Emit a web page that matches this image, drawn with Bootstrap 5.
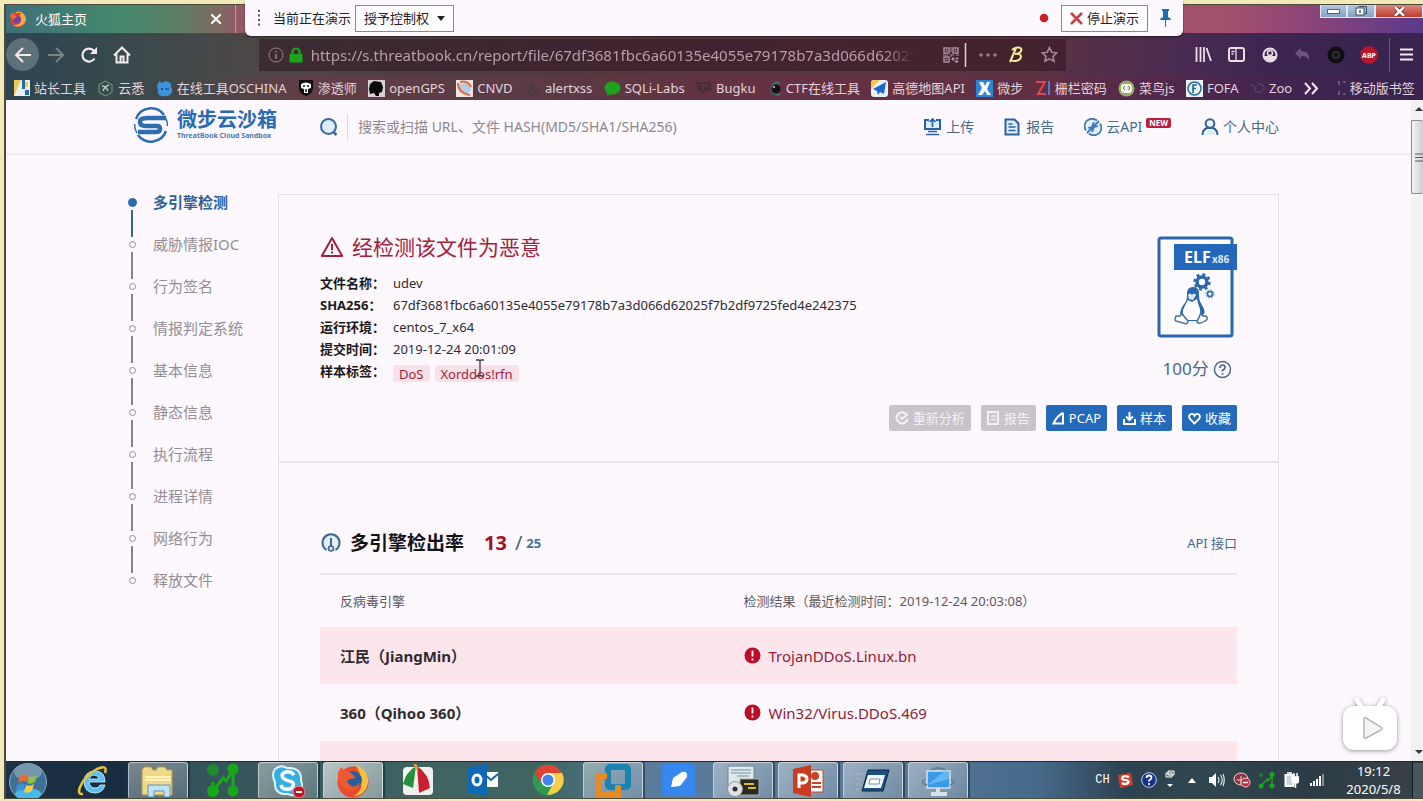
<!DOCTYPE html>
<html lang="zh-CN">
<head>
<meta charset="utf-8">
<meta name="viewport" content="width=device-width, initial-scale=1">
<title>微步云沙箱</title>
<link href="https://cdn.jsdelivr.net/npm/bootstrap@5.3.0/dist/css/bootstrap.min.css" rel="stylesheet">
<style>
:root { --ink:#2f2b31; --blue:#2a69b3; --steel:#49698a; --red:#a3213a; --page:#fcf8fd; --rule:#e9e4ea; }
body { font-family:"Noto Sans","Noto Sans CJK SC",sans-serif; font-size:13px; line-height:22px; color:var(--ink); background:#f1e9b8; }
a { text-decoration:none; color:inherit; }
svg { display:block; flex:none; }
.desk { height:100vh; padding:4px 0 2px 4px; overflow:hidden; }
.desk-inner { border-left:2px solid #4b4a3c; border-top:1px solid #4b4a3c; border-bottom:1px solid #4b4a3c; min-height:0; }
/* browser chrome */
.tabstrip { height:28px; background:linear-gradient(90deg,#3f6f7c 0,#45886c 8%,#5c7f66 12%,#7d6a60 15%,#9b5468 17%,#a3506b 86%,#8c4478 92%,#5a3a8c 100%); color:#fff; }
.tab-item { width:230px; padding:0 14px 0 3px; border-right:1px solid #c09aa0; }
.btn-bare { background:none; border:0; padding:0; color:inherit; display:flex; align-items:center; justify-content:center; }
.wbtns button { height:13px; border:1px solid #dfe8f2; border-top:0; background:linear-gradient(#b4c8de,#84a2c4); display:flex; align-items:center; justify-content:center; padding:0; }
.wbtns .w-close { background:linear-gradient(#d88a80,#c03a2c); }
.chrome-bg { background:linear-gradient(90deg,#2d4452 0,#36494c 7%,#4c4747 17%,#503d43 30%,#55383f 45%,#5a3742 58%,#5b3443 73%,#4b2b50 82%,#3c2551 90%,#38244f 100%); color:#e3d3dc; }
.navbar-row { height:43px; }
.nav-cell { width:33px; height:33px; }
.back-cell { background:#5e7078; border-radius:50%; }
.url-box { flex:0 0 57%; height:32px; background:rgba(40,14,26,.45); }
.url-box input { background:none; border:0; outline:0; color:#b99dab; font-size:15px; line-height:22px; padding:0; min-width:0; -webkit-mask-image:linear-gradient(90deg,#000 95%,transparent); mask-image:linear-gradient(90deg,#000 95%,transparent); }
.bm-row { height:24px; background:linear-gradient(90deg,transparent 0,transparent 14%,rgba(130,50,75,.35) 21%,rgba(120,60,80,.2) 36%,rgba(120,40,70,.4) 55%,rgba(90,35,70,.3) 85%,transparent 100%); white-space:nowrap; overflow:hidden; }
/* sharing toolbar */
.share-bar { position:absolute; top:0; left:245px; right:240px; height:36px; padding:0 8px 0 12px; background:var(--page); border-radius:0 0 6px 6px; box-shadow:0 1px 2px rgba(0,0,0,.5); color:#222; }
.share-btn { height:27px; border:1px solid #8c898e; background:#fffcff; border-radius:0; padding:0 8px; font-size:13px; line-height:20px; color:#222; }
/* site */
.site { background:var(--page); min-height:0; overflow:hidden; }
.site-wrap { width:82%; margin-left:121px; }
.site-head { height:55px; border-bottom:2px solid #efebf0; font-size:14px; color:var(--steel); }
.brand { padding:0 0 3px 6px; }
.brand-text { font-size:20px; line-height:22px; font-weight:700; color:var(--blue); }
.brand-sub { font-size:7px; line-height:10px; font-weight:700; color:#5278a2; white-space:nowrap; }
.search-ico { margin-left:42px; }
.search-in { border:0; border-left:1px solid #ddd7de; background:none; outline:0; font-size:14px; padding:0 0 0 10px; line-height:26px; height:26px; }
.search-in::placeholder { color:#8d8890; opacity:1; }
.site-nav { gap:30px; }
.new-tag { background:#b8213d; color:#fff; font-size:8px; line-height:10px; font-weight:700; padding:0 3px; border-radius:2px; }
.side { width:151px; flex:none; padding-top:40px; font-size:15px; line-height:15px; color:#938e95; }
.side a { display:flex; height:42px; }
.marker { width:10px; margin-right:16px; display:flex; flex-direction:column; align-items:center; }
.marker i { width:7px; height:7px; border:1px solid #938e95; border-radius:50%; margin:4px 0; flex:none; }
.marker b { width:2px; height:27px; background:#868288; }
.side .on { color:#2f6098; font-weight:700; }
.on .marker i { width:9px; height:9px; margin:3px 0; background:#2a69b3; border-color:#2a69b3; }
.on .marker b { background:#3a6488; }
.side a:last-child b { display:none; }
.panel { margin-top:39px; border:1px solid #e4dfe5; border-bottom:0; }
.summary { padding:36px 41px 30px; border-bottom:2px solid var(--rule); }
.verdict { font-size:21px; line-height:32px; color:var(--red); margin:0 0 9px; font-weight:400; }
.facts { display:grid; grid-template-columns:73px 1fr; grid-auto-rows:22px; margin:0; }
.facts dt { font-weight:700; color:#1a181b; }
.facts dt, .eng-table thead th { font-family:"Noto Sans","Noto Sans CJK TC",sans-serif; }
.facts dd { margin:0; }
.label-tag { background:#f8e2e9; color:var(--red); border-radius:3px; padding:0 6px; line-height:18px; }
.tags { padding-top:5px; gap:5px; }
.score { font-size:17px; line-height:28px; color:var(--steel); }
.actions { margin-top:22px; gap:10px; }
.act { border:0; border-radius:2px; height:26px; line-height:26px; font-size:13px; color:#fff; background:#2469ba; padding:0 6px; display:flex; align-items:center; gap:4px; white-space:nowrap; }
.act:disabled { background:#c8c4c9; color:#f4f0f5; }
.engines { padding:65px 41px 0; }
.eng-head { padding-bottom:15px; border-bottom:2px solid var(--rule); line-height:30px; }
.eng-head h2 { font-size:19px; line-height:30px; font-weight:700; margin:0; color:#151316; }
.eng-table { width:100%; table-layout:fixed; }
.eng-table th, .eng-table td { padding:0 0 0 20px; height:57px; font-size:15px; }
.eng-table thead th { height:52px; font-size:13px; font-weight:400; color:#5d585f; }
.eng-table tbody tr:nth-child(odd) { background:#fde6eb; }
.eng-table td { color:#90203a; }
.eng-table .c1 { width:44%; }
.page-bar { width:12px; background:#f4f1f5; flex:none; }
.page-bar .thumb { height:74px; border:1px solid #8f8b91; border-right:0; border-radius:2px; background:linear-gradient(90deg,#f6f4f7,#cfccd1); }
.tv { position:absolute; right:23px; bottom:45px; filter:drop-shadow(0 1px 2px rgba(0,0,0,.4)); }
.cursor { position:absolute; left:474px; top:359px; }
/* taskbar */
.taskbar { height:37px; border-top:1px solid #1f2b30; overflow:hidden; background:linear-gradient(90deg,#1c3247 0,#172c3e 8%,#34525a 13%,#3f6462 30%,#3f6462 38%,#5a7c9c 45%,#557593 65%,#46698a 73%,#2d4250 79%,#30474f 85%,#2c3c46 92%,#3a4148 100%); color:#fff; }
.start { margin:0 14px 0 3px; }
.slot { width:65px; height:37px; padding:0 5px 0 0; flex:0 0 auto; }
.slot button { width:60px; height:100%; }
.slot .open { border:1px solid rgba(230,240,245,.65); border-bottom:0; border-radius:3px; background:linear-gradient(135deg,rgba(255,255,255,.42),rgba(190,205,215,.25)); box-shadow:1px 0 0 1px rgba(15,30,40,.5); }
.slot .front { background:linear-gradient(135deg,rgba(255,255,255,.65),rgba(220,220,225,.45)); }
.tray-cell { width:25px; display:flex; justify-content:center; }
.lang-bar .tray-cell { width:23px; }
.lang-bar .tray-cell:last-child { width:19px; }
.clock { width:83px; padding-left:6px; text-align:center; line-height:18px; }
</style>
</head>
<body>
<div class="desk d-flex flex-column position-relative">
<div class="desk-inner d-flex flex-column flex-grow-1">

<header class="flex-shrink-0">
  <div class="tabstrip d-flex justify-content-between">
    <div class="tab-item d-flex align-items-center">
      <svg width="18" height="18" viewBox="0 0 18 18"><circle cx="9" cy="9.500" r="7.500" fill="#e2452f"/><path d="M6 3C9-1 17 3 17 9c0 6-8 10-13 6 7 1 10-5 6-8L12 3z" fill="#f7a63a"/><circle cx="8" cy="9.500" r="4" fill="#7a3fa0"/><path d="M1 6l3-4 1 3 3 1-4 4z" fill="#ee6a38"/></svg>
      <span class="ms-2">火狐主页</span>
      <button class="btn-bare ms-auto" aria-label="关闭标签页"><svg width="10" height="10" viewBox="0 0 10 10"><path d="M0 0l10 10M10 0L0 10" stroke="#fff" stroke-width="2"/></svg></button>
    </div>
    <div class="wbtns d-flex">
      <button style="width:27px" aria-label="最小化"><svg width="13" height="5" viewBox="0 0 13 5"><rect x=".5" y=".5" width="12" height="4" fill="#fff" stroke="#51617a"/></svg></button>
      <button style="width:28px" aria-label="还原"><svg width="12" height="10" viewBox="0 0 12 10"><path d="M3.500.5h8v7h-2" fill="none" stroke="#3d4c62"/><rect x="1" y="2" width="8" height="7" fill="#fff" stroke="#3d4c62"/><rect x="4" y="4" width="2" height="3" fill="#6784a8"/></svg></button>
      <button class="w-close" style="width:48px" aria-label="关闭"><svg width="11" height="9" viewBox="0 0 11 9"><path d="M1 0l9 9M10 0L1 9" stroke="#5c2320" stroke-width="4"/><path d="M1 0l9 9M10 0L1 9" stroke="#fff" stroke-width="2.500"/></svg></button>
    </div>
  </div>

  <div class="chrome-bg">
    <nav class="navbar-row d-flex align-items-center">
      <button class="btn-bare nav-cell back-cell" aria-label="后退"><svg width="18" height="16" viewBox="0 0 18 16"><path d="M17 8H2M9 1L2 8l7 7" fill="none" stroke="#f2e8ee" stroke-width="2"/></svg></button>
      <button class="btn-bare nav-cell" aria-label="前进"><svg width="18" height="16" viewBox="0 0 18 16"><path d="M1 8h15M9 1l7 7-7 7" fill="none" stroke="#7d8387" stroke-width="2"/></svg></button>
      <button class="btn-bare nav-cell" aria-label="刷新"><svg width="18" height="18" viewBox="0 0 18 18"><path d="M14.500 12.500A6.500 6.500 0 1 1 14 5" fill="none" stroke="#f2e8ee" stroke-width="2.200"/><path d="M17 1v7h-7z" fill="#f2e8ee"/></svg></button>
      <button class="btn-bare nav-cell" aria-label="主页"><svg width="18" height="18" viewBox="0 0 18 18"><path d="M1 9.500L9 1.500l8 8M3.500 8v8.500h11V8M7.500 16v-5.500h3V16" fill="none" stroke="#f2e8ee" stroke-width="2"/></svg></button>
      <div class="flex-grow-1"></div>
      <div class="url-box d-flex align-items-center ps-2 pe-2">
        <svg width="18" height="18" viewBox="0 0 18 18"><circle cx="9" cy="9" r="7" fill="none" stroke="#9c7f8c"/><path d="M9 8v5M9 5v1.500" stroke="#9c7f8c" stroke-width="1.500"/></svg>
        <svg class="ms-1" width="14" height="16" viewBox="0 0 14 16"><path d="M3.500 8V5a3.500 3.500 0 0 1 7 0v3" fill="none" stroke="#1ba31b" stroke-width="2.200"/><rect x=".5" y="7" width="13" height="8.500" rx="1" fill="#1ba31b"/></svg>
        <input class="flex-grow-1 ms-2" type="text" aria-label="地址" value="https://s.threatbook.cn/report/file/67df3681fbc6a60135e4055e79178b7a3d066d620251">
        <svg class="ms-4 ps-1" width="22" height="16" viewBox="0 0 16 16"><path d="M1 1h5v5H1zM10 1h5v5h-5zM1 10h5v5H1z" fill="none" stroke="#a88d9a" stroke-width="1.500"/><path d="M3 3h1v1H3zM12 3h1v1h-1zM3 12h1v1H3zM8 0v5M8 7v3M0 8h5M8 8h3M13 8h3M9 11h2v2H9zM13 11h2v1h-2zM12 14h3v1h-3z" fill="#a88d9a" stroke="#a88d9a"/></svg>
        <svg class="ms-1" width="3" height="24" viewBox="0 0 3 24"><path d="M1.500 0v24" stroke="#e2d8b8" stroke-width="1.500"/></svg>
        <svg class="ms-2 me-2 ps-1" width="22" height="6" viewBox="0 0 18 6"><g fill="#9a7f8c"><circle cx="2" cy="3" r="1.800"/><circle cx="9" cy="3" r="1.800"/><circle cx="16" cy="3" r="1.800"/></g></svg>
        <svg class="ms-1" width="16" height="18" viewBox="0 0 16 18"><path d="M1 16L7 2M3 4c4-4 11-3 9 1-1 2-4 3-6 3 6-1 7 2 5 5-2 2-6 3-9 1" fill="none" stroke="#f3ee95" stroke-width="2"/></svg>
        <svg class="ms-3" width="17" height="17" viewBox="0 0 17 17"><path d="M8.500 1.500l2.200 4.700 5 .6-3.700 3.500 1 5-4.500-2.500L4 15.300l1-5L1.300 6.800l5-.6z" fill="none" stroke="#a88796" stroke-width="1.600"/></svg>
      </div>
      <div class="flex-grow-1"></div>
      <button class="btn-bare nav-cell" aria-label="书库"><svg width="17" height="15" viewBox="0 0 17 15"><path d="M1.500 0v15M5.500 0v15M9 0v15M11.500 1l4.500 13" stroke="#eadfe8" stroke-width="1.800"/></svg></button>
      <button class="btn-bare nav-cell" aria-label="侧栏"><svg width="17" height="15" viewBox="0 0 17 15"><rect x="1" y="1" width="15" height="13" rx="2" fill="none" stroke="#eadfe8" stroke-width="2"/><path d="M8 1v13M3.500 4.500h3M3.500 7h2" stroke="#eadfe8" stroke-width="1.300"/></svg></button>
      <button class="btn-bare nav-cell" aria-label="账户"><svg width="16" height="16" viewBox="0 0 16 16"><circle cx="8" cy="8" r="6.500" fill="none" stroke="#eadfe8" stroke-width="2"/><circle cx="8" cy="6" r="2.500" fill="none" stroke="#eadfe8" stroke-width="1.500"/><path d="M2 9h12q-2 5-6 5t-6-5z" fill="#eadfe8"/></svg></button>
      <button class="btn-bare nav-cell" aria-label="撤销"><svg width="15" height="13" viewBox="0 0 15 13"><path d="M0 5l6-5v3c6 0 9 4 8 10-1-4-4-5-8-5v3z" fill="#6c5680"/></svg></button>
      <button class="btn-bare nav-cell" aria-label="扩展"><svg width="18" height="18" viewBox="0 0 18 18"><circle cx="9" cy="9" r="8.500" fill="#101012"/><circle cx="9" cy="9" r="3" fill="none" stroke="#3b3340" stroke-width="1.500"/></svg></button>
      <button class="btn-bare nav-cell" aria-label="Adblock Plus"><svg width="18" height="18" viewBox="0 0 18 18"><path d="M5.500.5h7l5 5v7l-5 5h-7l-5-5v-7z" fill="#b9152b"/><text x="9" y="12" font-size="7" font-weight="700" fill="#fff" text-anchor="middle">ABP</text></svg></button>
      <svg width="5" height="34" viewBox="0 0 5 34"><path d="M4.500 0v34" stroke="#6b5878"/></svg>
      <button class="btn-bare nav-cell" aria-label="菜单"><svg width="13" height="13" viewBox="0 0 13 13"><path d="M0 1.500h13M0 6.500h13M0 11.500h13" stroke="#f2e8f0" stroke-width="2"/></svg></button>
    </nav>

    <div class="bm-row d-flex align-items-center justify-content-between ps-2 pe-2">
      <a href="#" class="d-flex align-items-center gap-1"><svg width="16" height="16" viewBox="0 0 16 16"><rect width="16" height="16" fill="#e8f0f4"/><path d="M0 16L7 0H0zM11 2h3v5h-3z" fill="#eacb55"/><path d="M8 0h3v9H8zM11 10h4v5h-4z" fill="#236ab0"/></svg>站长工具</a>
      <a href="#" class="d-flex align-items-center gap-1"><svg width="17" height="17" viewBox="0 0 17 17"><path d="M8.500 1l6.500 3.700v7.600L8.500 16 2 12.300V4.700z" fill="none" stroke="#7f9a8c"/><path d="M5 6q4 0 6 5M12 5q-4 1-6 6" fill="none" stroke="#9fd0b4" stroke-width="1.500"/></svg>云悉</a>
      <a href="#" class="d-flex align-items-center gap-1"><svg width="17" height="17" viewBox="0 0 17 17"><path d="M1 6L3 1l3 2c5-4 10 0 9 4 3 4 0 9-5 9-6 1-9-2-8-6z" fill="#3f92dc"/><circle cx="6" cy="9" r="1" fill="#143a60"/><path d="M9 9h4" stroke="#143a60"/></svg>在线工具OSCHINA</a>
      <a href="#" class="d-flex align-items-center gap-1"><svg width="16" height="16" viewBox="0 0 16 16"><path d="M1 0h14v9q-2 6-7 7-5-1-7-7z" fill="#0f0c10"/><path d="M3 4q5-3 10 0v4l-3 1v4H6V9L3 8z" fill="#fff"/><path d="M5 6h2M9 6h2M8 9v3" stroke="#111" stroke-width="1.500"/></svg>渗透师</a>
      <a href="#" class="d-flex align-items-center gap-1"><svg width="17" height="17" viewBox="0 0 17 17"><rect width="17" height="17" fill="#d8d2d6"/><path d="M2 4l4-3 7 1 2 5-1 5-3 1v3H8l-2-3-4 1-1-5z" fill="#0b0a0b"/></svg>openGPS</a>
      <a href="#" class="d-flex align-items-center gap-1"><svg width="17" height="17" viewBox="0 0 17 17"><rect width="17" height="17" fill="#efe6e2"/><circle cx="9" cy="8" r="6" fill="#b7cde0"/><path d="M2 3q0 10 12 12M4 2q8-2 11 5" fill="none" stroke="#de6a4c" stroke-width="2"/></svg>CNVD</a>
      <a href="#" class="d-flex align-items-center gap-1"><svg width="17" height="15" viewBox="0 0 17 15"><path d="M8 2l3 5-3 2-3-2zM2 14l3-5 3 3zM9 13l3-5 3 5z" fill="#463d3f"/></svg>alertxss</a>
      <a href="#" class="d-flex align-items-center gap-1"><svg width="17" height="15" viewBox="0 0 17 15"><ellipse cx="8.500" cy="7" rx="8" ry="6.500" fill="#1da41f"/><path d="M3 12v3l4-2z" fill="#1da41f"/></svg>SQLi-Labs</a>
      <a href="#" class="d-flex align-items-center gap-1"><svg width="16" height="14" viewBox="0 0 16 14"><path d="M0 1h15v9H9l-4 4v-4H2z" fill="#4c2c36"/><path d="M5 4h6M5 7h3" stroke="#6b4650"/></svg>Bugku</a>
      <a href="#" class="d-flex align-items-center gap-1"><svg width="15" height="16" viewBox="0 0 15 16"><path d="M13 3A6 6 0 1 0 13 14" fill="none" stroke="#327a7c" stroke-width="2"/><circle cx="9" cy="9" r="4.500" fill="#121014"/><circle cx="7" cy="7" r="1" fill="#ddd"/></svg>CTF在线工具</a>
      <a href="#" class="d-flex align-items-center gap-1"><svg width="17" height="17" viewBox="0 0 17 17"><rect width="17" height="17" rx="3" fill="#e9f0f2"/><path d="M0 3q0-3 4-3h5L0 9z" fill="#f4c84c"/><path d="M15 2L2 9l4 2 1 4 2-3 4 2z" fill="#1c66c5"/></svg>高德地图API</a>
      <a href="#" class="d-flex align-items-center gap-1"><svg width="17" height="17" viewBox="0 0 17 17"><rect width="17" height="17" fill="#2e85d8"/><path d="M3 2h4l2 4 2-4h3l-3 7 4 6h-4l-2-4-3 4H2l4-7z" fill="#fff"/></svg>微步</a>
      <a href="#" class="d-flex align-items-center gap-1"><svg width="16" height="16" viewBox="0 0 16 16"><path d="M1 2h9L3 14h8" fill="none" stroke="#e0484c" stroke-width="2"/><path d="M14 1v14" stroke="#4d7bd6" stroke-width="2"/></svg>栅栏密码</a>
      <a href="#" class="d-flex align-items-center gap-1"><svg width="17" height="17" viewBox="0 0 17 17"><circle cx="8.500" cy="8.500" r="8" fill="#93ad62"/><rect x="3" y="4" width="11" height="9" rx="3" fill="#f3f5ea"/><path d="M7 6L5 8l2 2M10 6l2 2-2 2" fill="none" stroke="#617239"/></svg>菜鸟js</a>
      <a href="#" class="d-flex align-items-center gap-1"><svg width="17" height="17" viewBox="0 0 17 17"><rect width="17" height="17" fill="#eef3f6"/><circle cx="8.500" cy="8.500" r="6.500" fill="none" stroke="#2c6c9c" stroke-width="1.500"/><path d="M7 13V5h4M7 8.500h3" fill="none" stroke="#2c6c9c" stroke-width="1.700"/></svg>FOFA</a>
      <a href="#" class="d-flex align-items-center gap-1"><svg width="15" height="12" viewBox="0 0 15 12"><path d="M1 3q4 0 4 4t5 3q4 0 4-4t-6-4" fill="none" stroke="#5a4574" stroke-width="1.500" stroke-dasharray="3 1"/></svg>Zoo</a>
      <button class="btn-bare" aria-label="更多书签"><svg width="15" height="13" viewBox="0 0 15 13"><path d="M1 1l5 5.500L1 12M8 1l5 5.500L8 12" fill="none" stroke="#f2e8f0" stroke-width="2"/></svg></button>
      <a href="#" class="d-flex align-items-center gap-1 ms-2"><svg width="8" height="14" viewBox="0 0 8 14"><path d="M0 1h2M5 1h3M0 13h2M5 13h3M1 1v3M1 10v3" stroke="#8b7b95"/></svg>移动版书签</a>
    </div>
  </div>
</header>

<div class="site flex-grow-1 d-flex">
<div class="flex-grow-1">
  <div class="site-head">
    <div class="site-wrap h-100 d-flex align-items-center">
      <a href="#" class="brand d-flex align-items-center">
        <svg width="36" height="36" viewBox="0 0 36 36"><g fill="none" stroke="#2f6cb0"><path d="M3 12A16 16 0 0 1 31 8M33 24A16 16 0 0 1 5 28" stroke-width="2.500"/><path d="M1.500 17q0 5 2.500 9M34.500 19q0-5-2.500-9" stroke-width="1.500"/><path d="M33 11H14q-7 0-7 4t6 4h11q3 0 3 3t-4 3H5" stroke-width="4.500"/></g></svg>
        <span class="d-flex flex-column ms-2"><span class="brand-text">微步云沙箱</span><span class="brand-sub">ThreatBook Cloud Sandbox</span></span>
      </a>
      <label class="search-ico" for="q"><svg width="20" height="20" viewBox="0 0 20 20"><circle cx="9.500" cy="9.500" r="7.500" fill="#dcecf8" stroke="#3a6c9e" stroke-width="2"/><path d="M14.500 15l3 3" stroke="#3a6c9e" stroke-width="2.500"/></svg></label>
      <input id="q" class="search-in ms-2 flex-grow-1" type="text" placeholder="搜索或扫描 URL、文件 HASH(MD5/SHA1/SHA256)">
      <nav class="site-nav d-flex align-items-center text-nowrap">
        <a href="#" class="d-flex align-items-center gap-1"><svg width="19" height="18" viewBox="0 0 19 18"><path d="M6 2H2v9h15V2h-4" fill="#dcecf8" stroke="#2a62a2" stroke-width="2"/><path d="M9.500 9V2M6.500 4l3-3 3 3M5 13.500h9M3 16.500h13" fill="none" stroke="#2a62a2" stroke-width="1.700"/></svg>上传</a>
        <a href="#" class="d-flex align-items-center gap-1"><svg width="18" height="18" viewBox="0 0 18 18"><path d="M1.500 1.500h9l4 4v11h-13z" fill="#dcecf8" stroke="#2a62a2" stroke-width="2"/><path d="M4.500 6h4M4.500 9h7M4.500 12.500h7" stroke="#2a62a2" stroke-width="1.500"/></svg>报告</a>
        <a href="#" class="d-flex align-items-center gap-1"><svg width="18" height="18" viewBox="0 0 18 18"><circle cx="9" cy="9" r="6" fill="#dcecf8"/><path d="M2 12.500A7.500 7.500 0 0 1 13 2.500M16 5.500A7.500 7.500 0 0 1 5 15.500M4 10l4-1 2-5M14 8l-4 1-2 5M3 15L15 3" fill="none" stroke="#3b7ab5" stroke-width="1.800"/></svg>云API<span class="new-tag mb-2">NEW</span></a>
        <a href="#" class="d-flex align-items-center gap-1"><svg width="18" height="18" viewBox="0 0 18 18"><path d="M1.500 17q0-5 4.500-7h6q4.500 2 4.500 7" fill="none" stroke="#2a62a2" stroke-width="2"/><path d="M4 17q1-5 5-5t5 5z" fill="#dcecf8"/><circle cx="9" cy="5.500" r="4.300" fill="#f4f9fd" stroke="#2a62a2" stroke-width="2"/></svg>个人中心</a>
      </nav>
    </div>
  </div>

  <div class="site-wrap d-flex">
    <nav class="side">
      <a href="#" class="on"><span class="marker"><i></i><b></b></span>多引擎检测</a>
      <a href="#"><span class="marker"><i></i><b></b></span>威胁情报IOC</a>
      <a href="#"><span class="marker"><i></i><b></b></span>行为签名</a>
      <a href="#"><span class="marker"><i></i><b></b></span>情报判定系统</a>
      <a href="#"><span class="marker"><i></i><b></b></span>基本信息</a>
      <a href="#"><span class="marker"><i></i><b></b></span>静态信息</a>
      <a href="#"><span class="marker"><i></i><b></b></span>执行流程</a>
      <a href="#"><span class="marker"><i></i><b></b></span>进程详情</a>
      <a href="#"><span class="marker"><i></i><b></b></span>网络行为</a>
      <a href="#"><span class="marker"><i></i><b></b></span>释放文件</a>
    </nav>
    <main class="panel flex-grow-1">
      <section class="summary">
        <div class="d-flex justify-content-between">
          <div>
            <h1 class="verdict d-flex align-items-center"><svg class="me-2" width="24" height="22" viewBox="0 0 24 22"><path d="M12 2L1.800 20h20.400z" fill="none" stroke="#a3213a" stroke-width="2" stroke-linejoin="round"/><path d="M12 8v6M12 15.500v2" stroke="#a3213a" stroke-width="2"/></svg><span>经检测该文件为恶意</span></h1>
            <dl class="facts">
              <dt>文件名称：</dt><dd>udev</dd>
              <dt>SHA256：</dt><dd>67df3681fbc6a60135e4055e79178b7a3d066d62025f7b2df9725fed4e242375</dd>
              <dt>运行环境：</dt><dd>centos_7_x64</dd>
              <dt>提交时间：</dt><dd>2019-12-24 20:01:09</dd>
              <dt>样本标签：</dt><dd class="tags d-flex"><span class="label-tag">DoS</span><span class="label-tag">Xorddos!rfn</span></dd>
            </dl>
          </div>
          <div class="d-flex flex-column align-items-center pt-1">
            <svg width="80" height="104" viewBox="0 0 80 104">
              <rect x="2" y="3" width="73" height="98" rx="2" fill="#fdfbff" stroke="#2a67ad" stroke-width="3"/>
              <rect x="17" y="9" width="63" height="26" fill="#2368ba"/>
              <text x="27" y="28" font-size="16" font-weight="700" fill="#fff">ELF</text><text x="55" y="28" font-size="10" font-weight="700" fill="#d7e8fb">x86</text>
              <circle cx="45" cy="47" r="5" fill="none" stroke="#2a67ad" stroke-width="3.500"/><circle cx="45" cy="47" r="7.500" fill="none" stroke="#2a67ad" stroke-width="2.500" stroke-dasharray="3 2.900"/>
              <circle cx="53" cy="59" r="2.500" fill="none" stroke="#2a67ad" stroke-width="1.500"/><circle cx="53" cy="59" r="4" fill="none" stroke="#2a67ad" stroke-dasharray="1.500 1.600"/>
              <path d="M30 61q-1-9 6-9t6 9q0 5 4 11 3 5 0 8l-5 6H30l-7-7q1-7 5-11 2-3 2-7z" fill="#2a67ad"/>
              <path d="M31 65l4 2 5-3q1 5 3 10 1 5-3 11h-9q-6-5-5-10 2-5 5-10z" fill="#fff"/>
              <path d="M31 60q2-3 4 0 2-3 4 0l-3 5-4-1z" fill="#dce9f6"/>
              <path d="M25 79l6 7q0 4-5 2l-7-2q-2-1 0-5 4 1 6-2zM44 78q1 4 5 3 3 3-1 5-6 4-8 1z" fill="#fff" stroke="#4c759f" stroke-width="1.500"/>
            </svg>
            <div class="score d-flex align-items-center gap-1 mt-2 pt-2">100分<svg width="19" height="19" viewBox="0 0 19 19"><circle cx="9.500" cy="9.500" r="8" fill="none" stroke="#49698a" stroke-width="1.500"/><path d="M7 8q0-3 2.500-3T12 7.500q0 1.500-2.500 3v1M9.500 13v1.700" fill="none" stroke="#49698a" stroke-width="1.700"/></svg></div>
          </div>
        </div>
        <div class="actions d-flex justify-content-end">
          <button class="act" disabled><svg width="14" height="14" viewBox="0 0 14 14"><path d="M11 3A5.500 5.500 0 1 0 12.500 8" fill="none" stroke="#f4f0f5" stroke-width="2.200"/><path d="M5 6l2 2 6-5" fill="none" stroke="#f4f0f5" stroke-width="2"/></svg>重新分析</button>
          <button class="act" disabled><svg width="13" height="14" viewBox="0 0 13 14"><rect x="1" y="1" width="10" height="12" fill="none" stroke="#f4f0f5" stroke-width="2"/><path d="M4 5h5M4 8.500h5" stroke="#f4f0f5" stroke-width="1.500"/></svg>报告</button>
          <button class="act"><svg width="13" height="13" viewBox="0 0 13 13"><path d="M1.500 11.500Q5 4 10 1.500h1v10z" fill="none" stroke="#fff" stroke-width="2"/></svg>PCAP</button>
          <button class="act"><svg width="13" height="13" viewBox="0 0 13 13"><path d="M1 7v5h11V7M6.500 0v7M3 4.500L6.500 8 10 4.500" fill="none" stroke="#fff" stroke-width="2"/></svg>样本</button>
          <button class="act"><svg width="13" height="13" viewBox="0 0 13 13"><path d="M6.500 11.500L2 7Q0 4 2.500 2.300 5 1 6.500 3.800 8 1 10.500 2.300 13 4 11 7z" fill="none" stroke="#fff" stroke-width="1.800"/></svg>收藏</button>
        </div>
      </section>
      <section class="engines">
        <div class="eng-head d-flex align-items-center">
          <svg class="me-2" width="22" height="22" viewBox="0 0 22 22"><path d="M6.500 18A8.500 8.500 0 1 1 15.500 18" fill="#e2effa" stroke="#3c6795" stroke-width="2"/><path d="M11 6v8" stroke="#3c6795" stroke-width="2"/><circle cx="11" cy="16.500" r="2.500" fill="#cfe4f7" stroke="#3c6795" stroke-width="1.500"/></svg>
          <h2>多引擎检出率</h2>
          <span class="ms-3 ps-1 fs-5 fw-bold" style="color:#a11227">13</span><span class="ms-2 me-1 fs-5" style="color:#44678c">/</span><span class="fw-bold" style="color:#44719f">25</span>
          <a href="#" class="ms-auto" style="color:#44678c">API 接口</a>
        </div>
        <table class="eng-table">
          <thead><tr><th class="c1">反病毒引擎</th><th>检测结果（最近检测时间：2019-12-24 20:03:08）</th></tr></thead>
          <tbody>
            <tr><th scope="row">江民（JiangMin）</th><td><span class="d-flex align-items-center gap-2"><svg width="17" height="17" viewBox="0 0 17 17"><circle cx="8.500" cy="8.500" r="8" fill="#b90f28"/><path d="M8.500 3.500v6M8.500 11.500v2" stroke="#fff" stroke-width="1.800"/></svg>TrojanDDoS.Linux.bn</span></td></tr>
            <tr><th scope="row">360（Qihoo 360）</th><td><span class="d-flex align-items-center gap-2"><svg width="17" height="17" viewBox="0 0 17 17"><circle cx="8.500" cy="8.500" r="8" fill="#b90f28"/><path d="M8.500 3.500v6M8.500 11.500v2" stroke="#fff" stroke-width="1.800"/></svg>Win32/Virus.DDoS.469</span></td></tr>
            <tr><th></th><td></td></tr>
          </tbody>
        </table>
      </section>
    </main>
  </div>
</div>
<div class="page-bar d-flex flex-column">
  <svg class="my-1" width="12" height="12" viewBox="0 0 12 12"><path d="M4 7l4-4 4 4z" fill="#3b383d"/></svg>
  <div class="thumb d-flex align-items-center justify-content-end"><svg width="8" height="9" viewBox="0 0 8 9"><path d="M0 1h8M0 4.500h8M0 8h8" stroke="#5b585d"/></svg></div>
  <svg class="mt-auto mb-1" width="12" height="10" viewBox="0 0 12 10"><path d="M4 3l4 4 4-4z" fill="#3b383d"/></svg>
</div>
</div>

<footer class="taskbar d-flex align-items-center flex-shrink-0">
  <button class="btn-bare start" aria-label="开始"><svg width="40" height="37" viewBox="0 0 40 37"><circle cx="19" cy="20" r="18.500" fill="#3d7296" stroke="#8fa8b8"/><ellipse cx="19" cy="32" rx="13" ry="6" fill="#48b8e8"/><ellipse cx="19" cy="10" rx="14" ry="8" fill="#9bb0bc" opacity=".6"/><path d="M11 14q4-3 8-1l-2 7q-4-2-8 1z" fill="#e56a35"/><path d="M20 14q4 2 8-1l-2 7q-4 3-8 1z" fill="#94bd48"/><path d="M8 23q4-3 8-1l-2 7q-3-2-7 1z" fill="#3b8fdc"/><path d="M17 23q4 2 8-1l-2 7q-4 3-8 1z" fill="#f5cc45"/></svg></button>
  <div class="slot"><button class="btn-bare" aria-label="Internet Explorer"><svg width="34" height="34" viewBox="0 0 34 34"><path d="M29 19H13q1 6 6 6 4 0 5-3h5q-2 8-10 8-11 0-11-12Q9 8 19 8t10 11zM13 16h10q-1-4-5-4t-5 4z" fill="#5dc0f0" stroke="#d9f2fc" stroke-width=".8"/><path d="M29 10Q32 1 21 6 9 12 4 24q-3 8 3 7" fill="none" stroke="#e8c33c" stroke-width="2.500"/></svg></button></div>
  <div class="slot"><button class="btn-bare open" aria-label="资源管理器"><svg width="36" height="32" viewBox="0 0 36 32"><path d="M2 5l2-3h7l2 3h3l2-3h7l2 3h5v25H2z" fill="#eed88a" stroke="#b39a4d"/><path d="M5 12h26M5 15h26" stroke="#fff4c0" stroke-width="2"/><path d="M8 32V20h22v12h-6v-6H14v6z" fill="#bfe2f4" stroke="#5f96ba"/></svg></button></div>
  <div class="slot"><button class="btn-bare" aria-label="网络监视"><svg width="34" height="34" viewBox="0 0 34 34"><g fill="#16a818"><circle cx="7" cy="7" r="6" opacity=".65"/><circle cx="27" cy="6" r="5.500"/><circle cx="7" cy="28" r="6"/><circle cx="27" cy="28" r="5.500"/></g><path d="M7 27V19M27 6v22M8 27l9-12 3 3 7-11" fill="none" stroke="#16a818" stroke-width="3"/></svg></button></div>
  <div class="slot"><button class="btn-bare open" aria-label="Skype"><svg width="34" height="34" viewBox="0 0 34 34"><path d="M4 5q6-5 12-1 15-1 14 13 3 6-2 12-6 4-11 1Q3 31 4 18 0 11 4 5z" fill="#35aee6" stroke="#dff3fb" stroke-width="2"/><path d="M23 11q-3-4-8-3-6 2-3 6 2 2 6 3 6 1 4 5-2 4-7 3-4 0-5-4" fill="none" stroke="#fff" stroke-width="3.500"/><circle cx="28" cy="28" r="6" fill="#c01824" stroke="#e69a9a"/><path d="M25 28h6" stroke="#fff" stroke-width="2"/></svg></button></div>
  <div class="slot"><button class="btn-bare open front" aria-label="Firefox"><svg width="34" height="34" viewBox="0 0 34 34"><circle cx="17" cy="18" r="15.500" fill="#e84a30"/><path d="M20 1q13 5 12 18-3 13-15 13 10-4 8-16-1-8-5-15z" fill="#f5c23e"/><circle cx="17" cy="16" r="9" fill="#275f9e"/><path d="M2 9l3-6 3 3 7 3 5 5-7 1-2 3 4 4q5 2 9-4-1 9-11 9Q1 24 2 9z" fill="#ee5a30"/></svg></button></div>
  <div class="slot"><button class="btn-bare" aria-label="录屏"><svg width="32" height="32" viewBox="0 0 32 32"><rect x="1" y="3" width="30" height="28" rx="4" fill="#f2f0ef"/><path d="M14 2L11 24 1 20Q4 8 14 2z" fill="#21933d"/><path d="M15 2q12 8 13 22l-11 5z" fill="#c9202f"/><path d="M13 0l2 6" stroke="#e0a03a" stroke-width="3"/></svg></button></div>
  <div class="slot"><button class="btn-bare" aria-label="Outlook"><svg width="34" height="32" viewBox="0 0 34 32"><path d="M18 8h14v15H18z" fill="#fff"/><path d="M18 10l7 6 7-6" fill="none" stroke="#0f62a5" stroke-width="2"/><path d="M2 3l19-3v32L2 29z" fill="#0f68b5"/><ellipse cx="11" cy="16" rx="4" ry="5" fill="none" stroke="#fff" stroke-width="3"/></svg></button></div>
  <div class="slot"><button class="btn-bare" aria-label="Chrome"><svg width="32" height="32" viewBox="0 0 32 32"><circle cx="16" cy="16" r="15.500" fill="#2f9b50"/><path d="M2.500 9A15.500 15.500 0 0 1 30 9H16L9 19z" fill="#dc4437"/><path d="M16 9h14q4 8-1 15-5 7-14 7l7-13z" fill="#f7ce45"/><circle cx="16" cy="16" r="7" fill="#fff"/><circle cx="16" cy="16" r="5.500" fill="#4285e8"/></svg></button></div>
  <div class="slot"><button class="btn-bare open" aria-label="VMware"><svg width="36" height="34" viewBox="0 0 36 34"><rect x="13" y="3" width="20" height="20" rx="2" fill="none" stroke="#1b83b2" stroke-width="6"/><path d="M12 12H3v19h20V21" fill="none" stroke="#e58a25" stroke-width="6"/></svg></button></div>
  <div class="slot"><button class="btn-bare" aria-label="文档"><svg width="33" height="32" viewBox="0 0 33 32"><rect width="33" height="32" rx="3" fill="#3686f0"/><path d="M9 23l2-9 9-6q6-1 5 5l-7 9z" fill="#fff"/></svg></button></div>
  <div class="slot"><button class="btn-bare open" aria-label="安装程序"><svg width="34" height="32" viewBox="0 0 34 32"><path d="M2 1h26v20H2z" fill="#dfe9ec" stroke="#6a8594"/><path d="M5 5h20M5 8h20M11 11h12" stroke="#73929f"/><rect x="14" y="14" width="19" height="16" fill="#2b2a20" stroke="#a5a69c"/><path d="M18 19h10M22 23h8" stroke="#d9bd36" stroke-width="2"/><circle cx="9" cy="24" r="7.500" fill="#e1e4e6" stroke="#8e969b"/><circle cx="9" cy="24" r="2.500" fill="#333"/></svg></button></div>
  <div class="slot"><button class="btn-bare open" aria-label="PowerPoint"><svg width="32" height="32" viewBox="0 0 32 32"><path d="M16 5h15v22H16z" fill="#fff" stroke="#c84428"/><circle cx="23" cy="11" r="4" fill="#c84428"/><path d="M20 18h9M20 22h9" stroke="#c84428" stroke-width="2"/><path d="M1 4l18-4v32L1 28z" fill="#c83c24"/><path d="M7 23V10h4q4 1 4 4t-4 4H8" fill="none" stroke="#fff" stroke-width="3"/></svg></button></div>
  <div class="slot"><button class="btn-bare open" aria-label="运行"><svg width="34" height="24" viewBox="0 0 34 24"><path d="M12 1h21l-6 21H6z" fill="#1d4f82" stroke="#0d2744"/><path d="M12 6h17l-4 13H8z" fill="#f3f6f8"/><path d="M14 10h10l-1 5H13z" fill="#fff" stroke="#7d8e9b"/><path d="M0 5h7M0 10h5M0 15h4M0 20h3" stroke="#a3bacb"/></svg></button></div>
  <div class="slot"><button class="btn-bare open" aria-label="远程桌面"><svg width="34" height="32" viewBox="0 0 34 32"><path d="M8 8q8-10 20 0" fill="none" stroke="#5d7f92" stroke-width="2"/><rect x="6" y="6" width="23" height="17" fill="#3a9ae6" stroke="#cfe3ef" stroke-width="1.500"/><path d="M6 20L24 6h4v8z" fill="#77c1f5" opacity=".7"/><path d="M17 23v4M10 29h16" stroke="#d6e2e8" stroke-width="4"/><path d="M4 14q-6 4 2 6M30 14q6 4-1 6" fill="none" stroke="#5d7f92" stroke-width="1.500"/></svg></button></div>

  <div class="d-flex align-items-center ms-auto">
    <div class="lang-bar d-flex align-items-center">
      <span class="tray-cell" style="font:12px 'Liberation Mono',monospace">CH</span>
      <span class="tray-cell"><svg width="17" height="17" viewBox="0 0 17 17"><path d="M1 3l13-2 2 12-13 3z" fill="#d63a28"/><path d="M12 5q-6-2-7 1 0 2 4 2 4 1 2 3-3 2-6 0" fill="none" stroke="#fff" stroke-width="2.200"/></svg></span>
      <span class="tray-cell"><svg width="16" height="16" viewBox="0 0 16 16"><circle cx="8" cy="8" r="7.300" fill="#16328e" stroke="#c0d0ea"/><path d="M5.500 6q0-2.500 2.500-2.500T10.500 6q0 1-2.500 2.500v1M8 11v2" fill="none" stroke="#fff" stroke-width="1.800"/></svg></span>
      <span class="tray-cell"><svg width="10" height="20" viewBox="0 0 10 20"><path d="M3 1h6v4H3zM1 3h6v4H1z" fill="#51646d" stroke="#fff"/><path d="M2 14h6l-3 3z" fill="#fff"/></svg></span>
    </div>
    <span class="tray-cell"><svg width="8" height="5" viewBox="0 0 8 5"><path d="M0 5l4-5 4 5z" fill="#fff"/></svg></span>
    <span class="tray-cell"><svg width="17" height="14" viewBox="0 0 17 14"><path d="M1 4h3l4-4v14l-4-4H1z" fill="#fff"/><path d="M10 4q2 3 0 6M12.500 2q3.500 5 0 10M15 1q2.500 6 0 12" fill="none" stroke="#dbe4e8" stroke-width="1.200"/></svg></span>
    <span class="tray-cell"><svg width="18" height="16" viewBox="0 0 18 16"><ellipse cx="8" cy="7" rx="7" ry="6" fill="#8d3443" stroke="#f0d5d9"/><path d="M4 8h9M8 4v8" stroke="#f0d5d9"/><circle cx="12.500" cy="10.500" r="4.500" fill="#c32b3e" stroke="#f0d5d9"/><path d="M10 10.500h5" stroke="#fff" stroke-width="1.500"/></svg></span>
    <span class="tray-cell"><svg width="17" height="17" viewBox="0 0 17 17"><g fill="#16a818"><circle cx="3" cy="3" r="2" opacity=".6"/><circle cx="14" cy="2.500" r="2.500"/><circle cx="3" cy="14" r="2.500"/><circle cx="14" cy="14" r="2.500"/></g><path d="M3 14l6-7 1 2 4-6v11" fill="none" stroke="#16a818" stroke-width="1.500"/></svg></span>
    <span class="tray-cell"><svg width="15" height="16" viewBox="0 0 15 16"><rect x="1.500" y="3" width="8" height="11" fill="#c9d4d8" stroke="#fff" stroke-width="2"/><path d="M3 1h5M8 5h7v4q-1 2-3 2t-4-2zM10 1v4M13 1v4M11.500 11v5" fill="#fff" stroke="#fff" stroke-width="1.500"/></svg></span>
    <span class="tray-cell"><svg width="15" height="12" viewBox="0 0 15 12"><path d="M1 9h2v3H1zM4 7h2v5H4zM7 5h2v7H7zM10 2h2v10h-2z" fill="#fff"/><path d="M13 0h2v12h-2z" fill="#83929a"/></svg></span>
    <div class="clock">19:12<br>2020/5/8</div>
    <svg width="11" height="37" viewBox="0 0 11 37"><rect x=".5" y="0" width="12" height="37" fill="#4a565e" stroke="#11191f"/></svg>
  </div>
</footer>
</div>

<div class="share-bar d-flex align-items-center">
  <svg width="4" height="16" viewBox="0 0 4 16"><path d="M2 0v16" stroke="#555" stroke-width="2" stroke-dasharray="2 2.500"/></svg>
  <span class="ms-2 ps-1">当前正在演示</span>
  <button class="share-btn d-flex align-items-center gap-2 ms-1">授予控制权 <svg width="8" height="5" viewBox="0 0 8 5"><path d="M0 0h8L4 5z" fill="#222"/></svg></button>
  <svg class="ms-auto me-1" width="10" height="10" viewBox="0 0 10 10"><circle cx="5" cy="5" r="4.300" fill="#c81e2a"/></svg>
  <button class="share-btn d-flex align-items-center gap-1 ms-2 me-2"><svg width="13" height="13" viewBox="0 0 13 13"><path d="M1 1l11 11M12 1L1 12" stroke="#cf3a3a" stroke-width="2.500"/></svg>停止演示</button>
  <svg class="ms-1 me-1" width="11" height="18" viewBox="0 0 11 18"><path d="M2 0h7v2H8v6q3 1 3 3H6v7H5v-7H0q0-2 3-3V2H2z" fill="#1c6cb4"/></svg>
</div>

<svg class="cursor" width="12" height="18" viewBox="0 0 12 18"><path d="M2 1h3l1 1 1-1h3M6 2v13M2 17h3l1-1 1 1h3" fill="none" stroke="#3c393e" stroke-width="1.300"/></svg>
<svg class="tv" width="60" height="60" viewBox="0 0 60 60"><path d="M17 4l5 8M43 4l-5 8" stroke="#fff" stroke-width="5" stroke-linecap="round"/><rect x="3" y="10" width="54" height="44" rx="11" fill="#fff"/><path d="M24 23v18q0 2 2 1l15-8q2-1.500 0-3l-15-9q-2-1-2 1z" fill="#f6f3f7" stroke="#b9b5ba" stroke-width="1.500"/></svg>
</div>
<script src="https://cdn.jsdelivr.net/npm/bootstrap@5.3.0/dist/js/bootstrap.bundle.min.js"></script>
</body>
</html>
